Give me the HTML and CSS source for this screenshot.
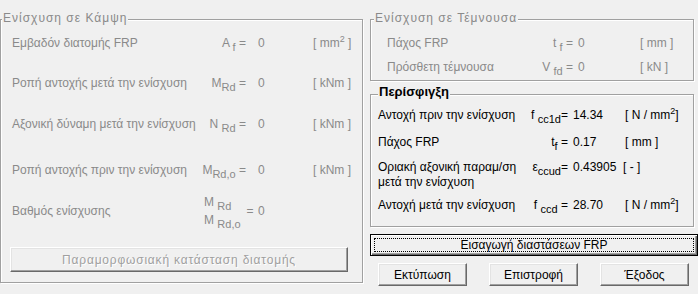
FILE: index.html
```html
<!DOCTYPE html>
<html lang="el">
<head>
    <meta charset="UTF-8">
    <meta name="viewport" content="width=device-width, initial-scale=1.0">
    <title>Ενίσχυση FRP</title>
    <link rel="stylesheet" href="styles.css">
</head>
<body>
    <div class="dialog">
        <div class="group bending">
            <span class="group-title">Ενίσχυση σε Κάμψη</span>
            <div class="row">
                <span class="label">Εμβαδόν διατομής FRP</span>
                <span class="sym">A <sub>f</sub> =</span>
                <span class="val">0</span>
                <span class="unit">[ mm<sup>2</sup> ]</span>
            </div>
            <div class="row row-2">
                <span class="label">Ροπή αντοχής μετά την ενίσχυση</span>
                <span class="sym">M<sub>Rd</sub> =</span>
                <span class="val">0</span>
                <span class="unit">[ kNm ]</span>
            </div>
            <div class="row row-3">
                <span class="label">Αξονική δύναμη μετά την ενίσχυση</span>
                <span class="sym">N <sub>Rd</sub> =</span>
                <span class="val">0</span>
                <span class="unit">[ kNm ]</span>
            </div>
            <div class="row row-4">
                <span class="label">Ροπή αντοχής πριν την ενίσχυση</span>
                <span class="sym">M<sub>Rd,o</sub> =</span>
                <span class="val">0</span>
                <span class="unit">[ kNm ]</span>
            </div>
            <div class="row row-5">
                <span class="label">Βαθμός ενίσχυσης</span>
                <span class="ratio">
                    <span class="frac">
                        <span>M <sub>Rd</sub></span>
                        <span>M <sub>Rd,o</sub></span>
                    </span>
                    <span class="eq">=</span>
                </span>
                <span class="val">0</span>
            </div>
            <button class="btn btn-wide" disabled>Παραμορφωσιακή κατάσταση διατομής</button>
        </div>

        <div class="side">
            <div class="group shear">
                <span class="group-title">Ενίσχυση σε Τέμνουσα</span>
                <div class="row">
                    <span class="label">Πάχος FRP</span>
                    <span class="sym">t <sub>f</sub> =</span>
                    <span class="val">0</span>
                    <span class="unit">[ mm ]</span>
                </div>
                <div class="row row-2">
                    <span class="label">Πρόσθετη τέμνουσα</span>
                    <span class="sym">V <sub>fd</sub> =</span>
                    <span class="val">0</span>
                    <span class="unit">[ kN ]</span>
                </div>
            </div>

            <div class="group confine">
                <span class="group-title">Περίσφιγξη</span>
                <div class="row">
                    <span class="label">Αντοχή πριν την ενίσχυση</span>
                    <span class="sym">f <sub>cc1d</sub>=</span>
                    <span class="val">14.34</span>
                    <span class="unit">[ N / mm<sup>2</sup>]</span>
                </div>
                <div class="row row-2">
                    <span class="label">Πάχος FRP</span>
                    <span class="sym">t<sub>f</sub> = </span>
                    <span class="val">0.17</span>
                    <span class="unit">[ mm ]</span>
                </div>
                <div class="row row-3">
                    <span class="label">Οριακή αξονική παραμ/ση<br>μετά την ενίσχυση</span>
                    <span class="sym">ε<sub>ccud</sub>=</span>
                    <span class="val">0.43905</span>
                    <span class="unit unit-near">[ - ]</span>
                </div>
                <div class="row row-4">
                    <span class="label">Αντοχή μετά την ενίσχυση</span>
                    <span class="sym">f <sub>ccd</sub> =</span>
                    <span class="val">28.70</span>
                    <span class="unit">[ N / mm<sup>2</sup>]</span>
                </div>
            </div>

            <button class="btn btn-default">Εισαγωγή διαστάσεων FRP</button>

            <div class="actions">
                <button class="btn">Εκτύπωση</button>
                <button class="btn">Επιστροφή</button>
                <button class="btn">Έξοδος</button>
            </div>
        </div>
    </div>
</body>
</html>
```

FILE: styles.css
```css
body {
    margin: 0;
    background: #f0f0f0;
    font-family: "Liberation Sans", Arial, sans-serif;
    font-size: 12px;
    color: #000;
}
.dialog {
    display: flex;
    align-items: flex-start;
    padding-top: 19px;
}
.group {
    position: relative;
    box-sizing: border-box;
    border: 1px solid #a0a0a0;
    box-shadow: 1px 1px 0 #fff, inset 1px 1px 0 #fff;
}
.group-title {
    position: absolute;
    top: -11px;
    left: 1px;
    padding: 0 1px;
    background: #f0f0f0;
    line-height: 18px;
    letter-spacing: 1px;
    color: #8a8a8a;
    white-space: nowrap;
}
.row {
    display: grid;
    height: 18px;
    line-height: 18px;
    align-items: center;
    white-space: nowrap;
}
.sym {
    text-align: right;
}
sub {
    font-size: 11px;
    vertical-align: -4px;
    line-height: 0;
}
sup {
    font-size: 9px;
    vertical-align: 5px;
    line-height: 0;
}

/* bending group (disabled look) */
.bending {
    width: 363px;
    height: 264px;
    padding-top: 14px;
    color: #8a8a8a;
}
.bending .row {
    padding-left: 11px;
    grid-template-columns: 183px 51px 67px auto;
}
.bending .val {
    padding-left: 12px;
}
.bending .row-2 { margin-top: 22px; }
.bending .row-3 { margin-top: 23px; }
.bending .row-4 { margin-top: 28px; }
.bending .row-5 {
    margin-top: 14px;
    height: 36px;
}
.ratio {
    display: flex;
    align-items: center;
    padding-left: 9px;
}
.frac {
    display: flex;
    flex-direction: column;
}
.eq {
    margin-left: 6px;
}

/* right column */
.side {
    margin-left: 7px;
    width: 328px;
}
.shear {
    width: 324px;
    height: 62px;
    padding: 14px 0 0 16px;
    color: #8a8a8a;
}
.shear .group-title {
    left: 3px;
}
.shear .row {
    grid-template-columns: 143px 43px 67px auto;
}
.shear .val {
    padding-left: 5px;
}
.shear .row-2 { margin-top: 6px; }

.confine {
    width: 324px;
    height: 133px;
    margin-top: 13px;
    padding: 11px 0 0 7px;
}
.confine .group-title {
    top: -12px;
    left: 7px;
    font-size: 13px;
    font-weight: bold;
    letter-spacing: 0;
    color: #000;
}
.confine .row {
    grid-template-columns: 140px 50px 57px auto;
}
.confine .val {
    padding-left: 5px;
}
.confine .row-2 { margin-top: 9px; }
.confine .row-3 {
    margin-top: 9px;
    height: 30px;
    line-height: 15px;
    align-items: start;
}
.confine .row-4 { margin-top: 6px; }
.unit-near {
    margin-left: -2px;
}

/* buttons */
.btn {
    box-sizing: border-box;
    font-family: inherit;
    font-size: 12px;
    color: #000;
    background: #f0f0f0;
    padding: 0;
    border: 1px solid;
    border-color: #fff #696969 #696969 #fff;
    box-shadow: inset -1px -1px 0 #a0a0a0, inset 1px 1px 0 #e3e3e3;
}
.btn-wide {
    display: block;
    width: 338px;
    height: 25px;
    margin: 18px 0 0 9px;
    color: #a0a0a0;
    text-shadow: 1px 1px 0 #fff;
    letter-spacing: 0.8px;
}
.btn-default {
    display: block;
    width: 328px;
    height: 22px;
    margin-top: 7px;
    border-color: #000;
    box-shadow: inset 1px 1px 0 #fff, inset -1px -1px 0 #696969, inset -2px -2px 0 #a0a0a0;
    outline: 1px dotted #000;
    outline-offset: -5px;
}
.actions {
    display: flex;
    gap: 22px;
    padding-left: 8px;
    margin-top: 7px;
}
.actions .btn {
    width: 89px;
    height: 23px;
}
```
